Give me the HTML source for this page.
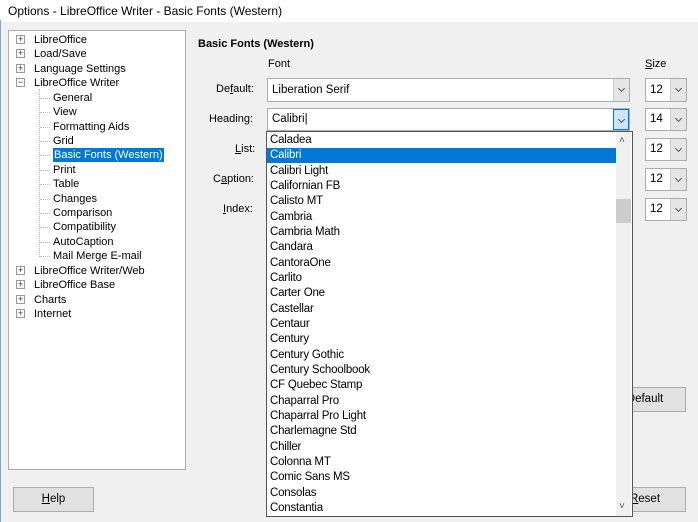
<!DOCTYPE html><html><head><style>
*{margin:0;padding:0;box-sizing:border-box}
body{width:698px;height:522px;background:#f0f0f0;font-family:"Liberation Sans",sans-serif;font-size:11px;color:#000;position:relative;overflow:hidden}
.a{position:absolute;white-space:nowrap}
.tb{position:absolute;left:0;top:0;width:698px;height:22px;background:#fff}
.box{position:absolute;background:#fff;border:1px solid #adadad}
.tree .a{line-height:14px}
.pm{position:absolute;width:9px;height:9px;border:1px solid #999;background:#fff;font-size:9px;line-height:7px;text-align:center;color:#333}
.hl{position:absolute;height:1px;width:10px;border-top:1px dotted #bbb}
.dd{position:absolute;background:#fff;border:1px solid #adadad}
.arr{position:absolute;right:0;top:0;bottom:0;width:16px;background:#e5e5e5;border-left:1px solid #ccc}
.arr:after{content:"";position:absolute;left:5px;top:7px;width:4px;height:4px;border-right:1px solid #555;border-bottom:1px solid #555;transform:rotate(45deg)}
.lst .a{left:3px;font-size:11.5px;letter-spacing:-0.2px;line-height:15.33px;height:15.33px;margin-top:1px}
.btn{position:absolute;background:#e1e1e1;border:1px solid #adadad;text-align:center;line-height:23px;font-size:11.5px}
</style></head><body>
<div class="tb"></div>
<div class="a" style="left:8px;top:4px;font-size:12px">Options - LibreOffice Writer - Basic Fonts (Western)</div>
<div style="position:absolute;left:0;top:20px;width:1px;height:502px;background:#7aa7d8"></div>

<div class="box tree" style="left:8px;top:30px;width:178px;height:440px">
<div class="pm" style="left:7px;top:4px">+</div><div class="a" style="left:25px;top:2px">LibreOffice</div>
<div class="pm" style="left:7px;top:18px">+</div><div class="a" style="left:25px;top:16px">Load/Save</div>
<div class="pm" style="left:7px;top:33px">+</div><div class="a" style="left:25px;top:31px">Language Settings</div>
<div class="pm" style="left:7px;top:47px">−</div><div class="a" style="left:25px;top:45px">LibreOffice Writer</div>
<div style="position:absolute;left:30px;top:58px;width:1px;height:168px;border-left:1px dotted #bbb"></div>
<div class="hl" style="left:31px;top:67px"></div><div class="a" style="left:44px;top:60px">General</div>
<div class="hl" style="left:31px;top:81px"></div><div class="a" style="left:44px;top:74px">View</div>
<div class="hl" style="left:31px;top:96px"></div><div class="a" style="left:44px;top:89px">Formatting Aids</div>
<div class="hl" style="left:31px;top:110px"></div><div class="a" style="left:44px;top:103px">Grid</div>
<div class="hl" style="left:31px;top:124px"></div><div class="a" style="left:44px;top:117px;background:#0078d7;color:#fff;padding:0 1px">Basic Fonts (Western)</div>
<div class="hl" style="left:31px;top:139px"></div><div class="a" style="left:44px;top:132px">Print</div>
<div class="hl" style="left:31px;top:153px"></div><div class="a" style="left:44px;top:146px">Table</div>
<div class="hl" style="left:31px;top:168px"></div><div class="a" style="left:44px;top:161px">Changes</div>
<div class="hl" style="left:31px;top:182px"></div><div class="a" style="left:44px;top:175px">Comparison</div>
<div class="hl" style="left:31px;top:196px"></div><div class="a" style="left:44px;top:189px">Compatibility</div>
<div class="hl" style="left:31px;top:211px"></div><div class="a" style="left:44px;top:204px">AutoCaption</div>
<div class="hl" style="left:31px;top:225px"></div><div class="a" style="left:44px;top:218px">Mail Merge E-mail</div>
<div class="pm" style="left:7px;top:235px">+</div><div class="a" style="left:25px;top:233px">LibreOffice Writer/Web</div>
<div class="pm" style="left:7px;top:249px">+</div><div class="a" style="left:25px;top:247px">LibreOffice Base</div>
<div class="pm" style="left:7px;top:264px">+</div><div class="a" style="left:25px;top:262px">Charts</div>
<div class="pm" style="left:7px;top:278px">+</div><div class="a" style="left:25px;top:276px">Internet</div>
</div>

<div class="a" style="left:198px;top:38px;font-weight:bold">Basic Fonts (Western)</div>
<div class="a" style="left:268px;top:58px">Font</div>
<div class="a" style="left:645px;top:58px"><u>S</u>ize</div>
<div class="a" style="left:216px;top:83px">De<u>f</u>ault:</div>
<div class="a" style="left:209px;top:113px">Heading:</div>
<div class="a" style="left:235px;top:143px"><u>L</u>ist:</div>
<div class="a" style="left:213px;top:173px">C<u>a</u>ption:</div>
<div class="a" style="left:223px;top:203px"><u>I</u>ndex:</div>

<div class="dd" style="left:267px;top:78px;width:363px;height:24px"><div class="a" style="left:4px;top:5px;font-size:11.5px">Liberation Serif</div><div class="arr"></div></div>
<div class="dd" style="left:267px;top:108px;width:363px;height:23px"><div class="a" style="left:4px;top:4px;font-size:11.5px">Calibri|</div><div class="arr" style="background:#cce4f7;border:1px solid #0078d7"></div></div>

<div class="dd" style="left:645px;top:78px;width:42px;height:24px"><div class="a" style="left:4px;top:5px;font-size:11.5px">12</div><div class="arr"></div></div>
<div class="dd" style="left:645px;top:108px;width:42px;height:23px"><div class="a" style="left:4px;top:4px;font-size:11.5px">14</div><div class="arr"></div></div>
<div class="dd" style="left:645px;top:138px;width:42px;height:23px"><div class="a" style="left:4px;top:4px;font-size:11.5px">12</div><div class="arr"></div></div>
<div class="dd" style="left:645px;top:168px;width:42px;height:23px"><div class="a" style="left:4px;top:4px;font-size:11.5px">12</div><div class="arr"></div></div>
<div class="dd" style="left:645px;top:198px;width:42px;height:23px"><div class="a" style="left:4px;top:4px;font-size:11.5px">12</div><div class="arr"></div></div>

<div class="btn" style="left:600px;top:387px;width:86px;height:25px;padding-left:4px">Default</div>
<div class="btn" style="left:600px;top:487px;width:86px;height:25px;padding-left:4px"><u>R</u>eset</div>
<div class="btn" style="left:13px;top:487px;width:81px;height:25px"><u>H</u>elp</div>

<div class="lst" style="position:absolute;left:266px;top:131px;width:367px;height:386px;background:#fff;border:1px solid #555">
<div style="position:absolute;left:0;top:16px;width:349px;height:15px;background:#0078d7"></div>
<div style="position:absolute;right:1px;top:0;width:15px;bottom:0;background:#f0f0f0"></div>
<div style="position:absolute;right:1px;top:67px;width:15px;height:24px;background:#cdcdcd"></div>
<div class="a" style="left:352px;top:0;font-size:10px;color:#555;letter-spacing:0">˄</div>
<div class="a" style="left:352px;top:366px;font-size:10px;color:#555;letter-spacing:0">˅</div>
<div class="a" style="top:0">Caladea</div>
<div class="a" style="top:15.33px;color:#fff">Calibri</div>
<div class="a" style="top:30.66px">Calibri Light</div>
<div class="a" style="top:46px">Californian FB</div>
<div class="a" style="top:61.3px">Calisto MT</div>
<div class="a" style="top:76.6px">Cambria</div>
<div class="a" style="top:92px">Cambria Math</div>
<div class="a" style="top:107.3px">Candara</div>
<div class="a" style="top:122.6px">CantoraOne</div>
<div class="a" style="top:138px">Carlito</div>
<div class="a" style="top:153.3px">Carter One</div>
<div class="a" style="top:168.6px">Castellar</div>
<div class="a" style="top:184px">Centaur</div>
<div class="a" style="top:199.3px">Century</div>
<div class="a" style="top:214.6px">Century Gothic</div>
<div class="a" style="top:230px">Century Schoolbook</div>
<div class="a" style="top:245.3px">CF Quebec Stamp</div>
<div class="a" style="top:260.6px">Chaparral Pro</div>
<div class="a" style="top:276px">Chaparral Pro Light</div>
<div class="a" style="top:291.3px">Charlemagne Std</div>
<div class="a" style="top:306.6px">Chiller</div>
<div class="a" style="top:322px">Colonna MT</div>
<div class="a" style="top:337.3px">Comic Sans MS</div>
<div class="a" style="top:352.6px">Consolas</div>
<div class="a" style="top:368px">Constantia</div>
</div>
</body></html>
